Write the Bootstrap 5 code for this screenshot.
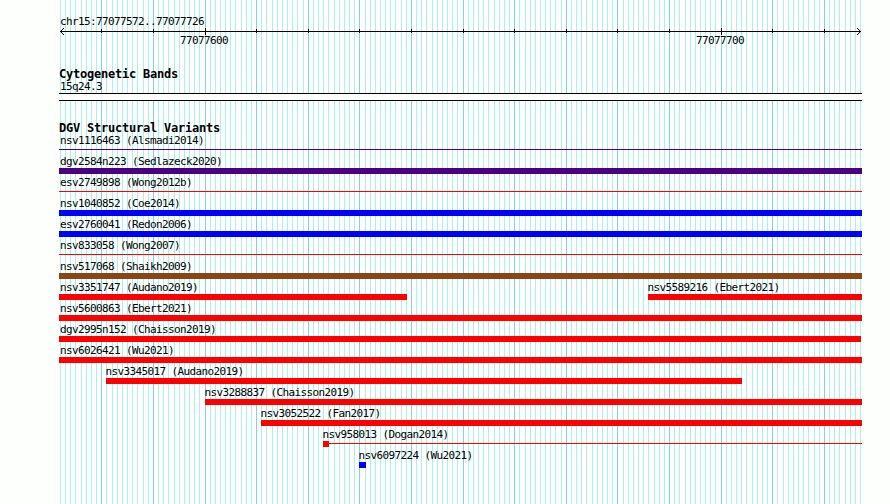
<!DOCTYPE html>
<html lang="en">
<head>
    <meta charset="UTF-8">
    <meta name="viewport" content="width=device-width, initial-scale=1.0">
    <title>DGV chr15:77077572..77077726</title>
    <link rel="stylesheet" href="https://cdn.jsdelivr.net/npm/bootstrap@5.3.3/dist/css/bootstrap.min.css">
    <style>
        body {
            background-color: #fdfffc;
            color: #000;
            font-family: "DejaVu Sans Mono", monospace;
            font-size: 11px;
            line-height: 13px;
            letter-spacing: -0.622px;
        }
        .browser {
            height: 504px;
        }
        .panel {
            width: 803px;
            margin-left: 59px;
            padding-top: 15px;
        }
        .region {
            padding-left: 1px;
            height: 13px;
        }
        .ruler {
            height: 7px;
        }
        .scale-labels {
            height: 34px;
            margin-top: -1px;
        }
        .scale-labels span {
            width: 48px;
        }
        .track-title {
            font-size: 12px;
            font-weight: bold;
            line-height: 13px;
            letter-spacing: -0.225px;
            margin: 0;
            height: 12px;
        }
        .cytoband {
            height: 8px;
            border-top: 1px solid #000;
            border-bottom: 1px solid #000;
            background-color: #fdfffc;
            margin-bottom: 21px;
        }
        .variants {
            height: 21px;
        }
        .label {
            height: 13px;
        }
        .bar {
            height: 6px;
        }
        .thin {
            height: 1px;
            margin-top: 2px;
        }
        .indigo { background-color: #4b0082; }
        .blue { background-color: #0000ff; }
        .red { background-color: #ff0000; }
        .brown { background-color: #8b4513; }
    </style>
</head>
<body>

    <div class="browser position-relative overflow-hidden">
        <svg id="grid" class="position-absolute top-0 start-0" width="890" height="504" shape-rendering="crispEdges"></svg>

        <div class="panel position-relative">
            <div class="region text-nowrap">chr15:77077572..77077726</div>
            <svg id="ruler" class="ruler d-block" width="803" height="7" shape-rendering="crispEdges"></svg>
            <div class="scale-labels d-flex" id="scaleLabels"></div>

            <h2 class="track-title text-nowrap">Cytogenetic Bands</h2>
            <div class="region">15q24.3</div>
            <div class="cytoband"></div>

            <h2 class="track-title text-nowrap">DGV Structural Variants</h2>
            <div id="variants"></div>
        </div>
    </div>

    <script src="https://cdn.jsdelivr.net/npm/bootstrap@5.3.3/dist/js/bootstrap.bundle.min.js"></script>
    <script>
        const left = 59;
        const bases = 155;

        // x of a base boundary, counted from 77077572
        function baseX(i) {
            return Math.round(60 + i * 800 / bases);
        }

        function rect(x, y, w, h, color) {
            return `<rect x="${x}" y="${y}" width="${w}" height="${h}" fill="${color}"/>`;
        }

        // vertical grid, one line per base, darker every ten
        let lines = "";
        for (let i = 0; i <= bases; i++) {
            lines += rect(baseX(i), 0, 1, 504, i % 10 === 8 ? "#87ceeb" : "#afeeee");
        }
        document.getElementById("grid").innerHTML = lines;

        // ruler with arrow heads and ticks
        let ruler = rect(1, 3, 801, 1, "#000");
        for (let i = 1; i <= 3; i++) {
            ruler += rect(1 + i, 3 - i, 1, 1, "#000") + rect(1 + i, 3 + i, 1, 1, "#000");
            ruler += rect(801 - i, 3 - i, 1, 1, "#000") + rect(801 - i, 3 + i, 1, 1, "#000");
        }
        for (let i = 8; i < bases; i += 10) {
            const labelled = i === 28 || i === 128;
            ruler += rect(baseX(i) - left, labelled ? 0 : 1, 1, labelled ? 7 : 4, "#000");
        }
        document.getElementById("ruler").innerHTML = ruler;

        document.getElementById("scaleLabels").innerHTML =
            `<span style="margin-left:121px">77077600</span><span style="margin-left:468px">77077700</span>`;

        // each row holds [name, start, end, color, style]
        const rows = [
            [["nsv1116463 (Alsmadi2014)", 59, 862, "indigo", "thin"]],
            [["dgv2584n223 (Sedlazeck2020)", 59, 862, "indigo"]],
            [["esv2749898 (Wong2012b)", 59, 862, "red", "thin"]],
            [["nsv1040852 (Coe2014)", 59, 862, "blue"]],
            [["esv2760041 (Redon2006)", 59, 862, "blue"]],
            [["nsv833058 (Wong2007)", 59, 862, "red", "thin"]],
            [["nsv517068 (Shaikh2009)", 59, 862, "brown"]],
            [["nsv3351747 (Audano2019)", 59, 407, "red"], ["nsv5589216 (Ebert2021)", 648, 862, "red"]],
            [["nsv5600863 (Ebert2021)", 59, 862, "red"]],
            [["dgv2995n152 (Chaisson2019)", 59, 861, "red"]],
            [["nsv6026421 (Wu2021)", 59, 862, "red"]],
            [["nsv3345017 (Audano2019)", 106, 742, "red"]],
            [["nsv3288837 (Chaisson2019)", 205, 862, "red"]],
            [["nsv3052522 (Fan2017)", 261, 862, "red"]],
            [["nsv958013 (Dogan2014)", 323, 862, "red", "block"]],
            [["nsv6097224 (Wu2021)", 359, 366, "blue"]]
        ];

        let html = "";
        rows.forEach(row => {
            let x = left;
            html += `<div class="variants d-flex">`;
            row.forEach(([name, start, end, color, style]) => {
                let glyph = `<div class="bar ${color}"></div>`;
                if (style === "thin") {
                    glyph = `<div class="thin ${color}"></div>`;
                } else if (style === "block") {
                    glyph = `<div class="d-flex"><div class="bar ${color}" style="width:6px"></div><div class="thin flex-grow-1 ${color}"></div></div>`;
                }
                const shift = start === left ? 1 : -0.5;
                html += `<div style="margin-left:${start - x}px;width:${end - start}px">
                    <div class="label text-nowrap" style="text-indent:${shift}px">${name}</div>${glyph}</div>`;
                x = end;
            });
            html += `</div>`;
        });
        document.getElementById("variants").innerHTML = html;
    </script>

</body>
</html>
